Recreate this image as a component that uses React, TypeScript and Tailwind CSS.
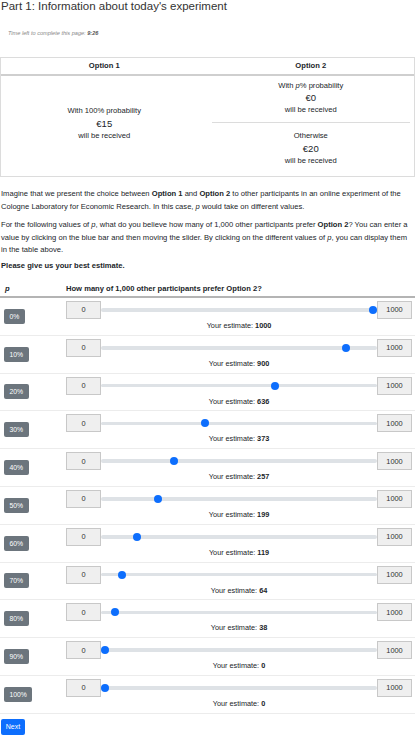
const rows = [
  { p: '0%', v: 1000 },
  { p: '10%', v: 900 },
  { p: '20%', v: 636 },
  { p: '30%', v: 373 },
  { p: '40%', v: 257 },
  { p: '50%', v: 199 },
  { p: '60%', v: 119 },
  { p: '70%', v: 64 },
  { p: '80%', v: 38 },
  { p: '90%', v: 0 },
  { p: '100%', v: 0 },
]

function EstimateRow({ p, v }: { p: string; v: number }) {
  return (
    <div className="flex h-[37.8px] border-b border-[#ececec]">
      {/* p button */}
      <div className="w-[66px] flex items-center pl-[4px]">
        <button className="h-[15px] px-[5.5px] rounded-[2px] bg-[#6c757d] text-white text-[6.8px] leading-[15px]">{p}</button>
      </div>
      {/* slider + estimate */}
      <div className="flex-1 pr-[3px] pt-[3px]">
        <div className="flex items-center h-[18px]">
          <div className="w-[35px] h-[18px] border border-[#c8c8c8] bg-[#efefef] flex items-center justify-center text-[7.4px] text-[#333]">0</div>
          <div className="relative flex-1 h-[8px] flex items-center">
            <div className="w-full h-[3.5px] rounded-full bg-[#dee2e6]" />
            <div
              className="absolute top-0 w-[8px] h-[8px] rounded-full bg-[#0d6efd]"
              style={{ left: `calc((100% - 8px) * ${v / 1000})` }}
            />
          </div>
          <div className="w-[35px] h-[18px] border border-[#c8c8c8] bg-[#efefef] flex items-center justify-center text-[7.4px] text-[#333]">1000</div>
        </div>
        <div className="text-center text-[7.3px] leading-[12px] mt-[1px]">
          Your estimate: <span className="font-bold">{v}</span>
        </div>
      </div>
    </div>
  )
}

export default function App() {
  return (
    <div className="w-[415px] bg-white text-[#212529] font-['Liberation_Sans',Arial,sans-serif]">
      {/* title */}
      <h1 className="pl-[1px] text-[11.5px] leading-[13px] text-[#333]">Part 1: Information about today's experiment</h1>
      <div className="mt-[16px] pl-[8px] text-[5.6px] leading-[8px] italic text-[#888]">
        Time left to complete this page: <span className="font-bold text-[#555]">9:26</span>
      </div>

      {/* options table */}
      <div className="mt-[20px] border border-[#dcdcdc] text-[7.6px]">
        <div className="flex h-[18px] items-center border-b-2 border-[#cfcfcf] font-bold">
          <div className="w-1/2 text-center">Option 1</div>
          <div className="w-1/2 text-center">Option 2</div>
        </div>
        <div className="flex h-[100px]">
          <div className="w-1/2 flex flex-col items-center justify-center pb-[4px] leading-[12.5px]">
            <div>With 100% probability</div>
            <div className="text-[9.5px]">€15</div>
            <div>will be received</div>
          </div>
          <div className="w-1/2 flex flex-col px-[4px] text-center">
            <div className="pt-[4px] pb-[6px] border-b border-[#dcdcdc] leading-[12px]">
              <div>With <i>p</i>% probability</div>
              <div className="text-[9.5px]">€0</div>
              <div>will be received</div>
            </div>
            <div className="pt-[7px] leading-[12.5px]">
              <div>Otherwise</div>
              <div className="text-[9.5px]">€20</div>
              <div>will be received</div>
            </div>
          </div>
        </div>
      </div>

      {/* text */}
      <div className="px-[1px] text-[7.6px] leading-[12.5px]">
        <p className="mt-[11px]">
          Imagine that we present the choice between <b>Option 1</b> and <b>Option 2</b> to other participants in an online experiment of the Cologne Laboratory for Economic Research. In this case, <i>p</i> would take on different values.
        </p>
        <p className="mt-[6px]">
          For the following values of <i>p</i>, what do you believe how many of 1,000 other participants prefer <b>Option 2</b>? You can enter a value by clicking on the blue bar and then moving the slider. By clicking on the different values of <i>p</i>, you can display them in the table above.
        </p>
        <p className="mt-[3.5px] font-bold">Please give us your best estimate.</p>
      </div>

      {/* estimates table */}
      <div className="mt-[6px] flex pt-[4px] pb-[1.5px] border-b-2 border-[#b4b4b4] text-[7.6px] leading-[12px] font-bold">
        <div className="w-[66px] pl-[5px] italic">p</div>
        <div>How many of 1,000 other participants prefer Option 2?</div>
      </div>
      {rows.map((r) => (
        <EstimateRow key={r.p} p={r.p} v={r.v} />
      ))}

      <div className="flex pt-[5px] pl-[1px]">
        <button className="h-[16px] w-[24px] rounded-[2px] bg-[#0d6efd] text-white text-[7px] leading-[16px]">Next</button>
      </div>
    </div>
  )
}
